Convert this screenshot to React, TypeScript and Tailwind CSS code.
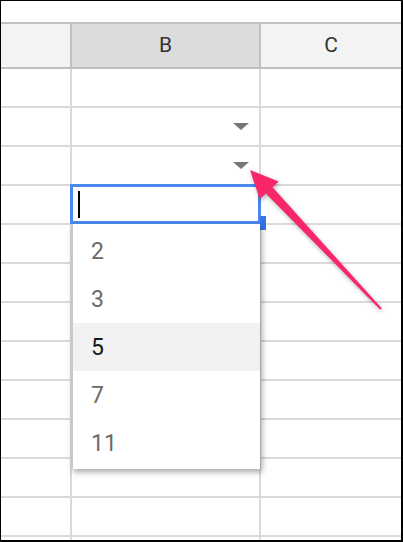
import React from "react";

const options = ["2", "3", "5", "7", "11"];

function DropArrow() {
  return (
    <svg width="16" height="7" viewBox="0 0 16 7" className="block">
      <polygon points="0,0 16,0 8,7" fill="#777777" />
    </svg>
  );
}

function Row({ arrow }: { arrow?: boolean }) {
  return (
    <div className="flex h-[39px] shrink-0 border-b-2 border-[#dadada]">
      <div className="w-[71px] border-r-2 border-[#dadada]" />
      <div className="w-[189px] border-r-2 border-[#dadada] flex items-center justify-end pr-[10px]">
        {arrow && <DropArrow />}
      </div>
      <div className="flex-1" />
    </div>
  );
}

export default function App() {
  const rows = Array.from({ length: 13 }, (_, i) => i);
  return (
    <div
      className="relative w-[403px] h-[542px] overflow-hidden bg-white border-t border-l border-r-2 border-b-2 border-black flex flex-col"
      style={{ fontFamily: "Roboto, 'Liberation Sans', Arial, sans-serif" }}
    >
      <div className="h-[21px] shrink-0" />
      {/* column header */}
      <div className="flex h-[47px] shrink-0 border-t-2 border-b-2 border-[#c0c0c0] text-[21px] text-[#333333]">
        <div className="w-[71px] bg-[#f3f3f3] border-r-2 border-[#c0c0c0]" />
        <div className="w-[189px] bg-[#dcdcdc] border-r-2 border-[#c0c0c0] flex items-center justify-center">
          B
        </div>
        <div className="flex-1 bg-[#f3f3f3] flex items-center justify-center">C</div>
      </div>
      {rows.map((i) => (
        <Row key={i} arrow={i === 1 || i === 2} />
      ))}

      {/* active cell editor */}
      <div className="absolute left-[69px] top-[183px] w-[191px] h-[40px] border-[3px] border-[#4a89f0] bg-white flex items-center pl-[5px]">
        <div className="w-[2px] h-[27px] bg-black" />
      </div>
      <div className="absolute left-[259px] top-[215px] w-[6px] h-[14px] bg-[#3575e6]" />

      {/* validation dropdown */}
      <div className="absolute left-[70px] top-[223px] w-[189px] h-[245px] bg-white border-l-2 border-[#c8c8c8] shadow-[2px_3px_6px_rgba(0,0,0,0.35)] pt-[3px] flex flex-col">
        {options.map((o) => (
          <div
            key={o}
            className={`h-[48px] shrink-0 flex items-center pl-[18px] pt-[3px] text-[23px] ${
              o === "5" ? "bg-[#f2f2f2] text-[#1a1a1a]" : "text-[#6a6a6a]"
            }`}
          >
            {o}
          </div>
        ))}
      </div>

      {/* callout arrow */}
      <svg
        className="absolute left-[-1px] top-[-1px] pointer-events-none"
        width="403"
        height="542"
        viewBox="0 0 403 542"
        style={{ filter: "drop-shadow(1px 2px 2px rgba(0,0,0,0.3))" }}
      >
        <polygon
          points="250,170 278.7,181.5 272.5,187.3 381.7,308.3 380.3,309.7 265.9,193.5 259.7,199.3"
          fill="#f8276a"
        />
      </svg>
    </div>
  );
}
